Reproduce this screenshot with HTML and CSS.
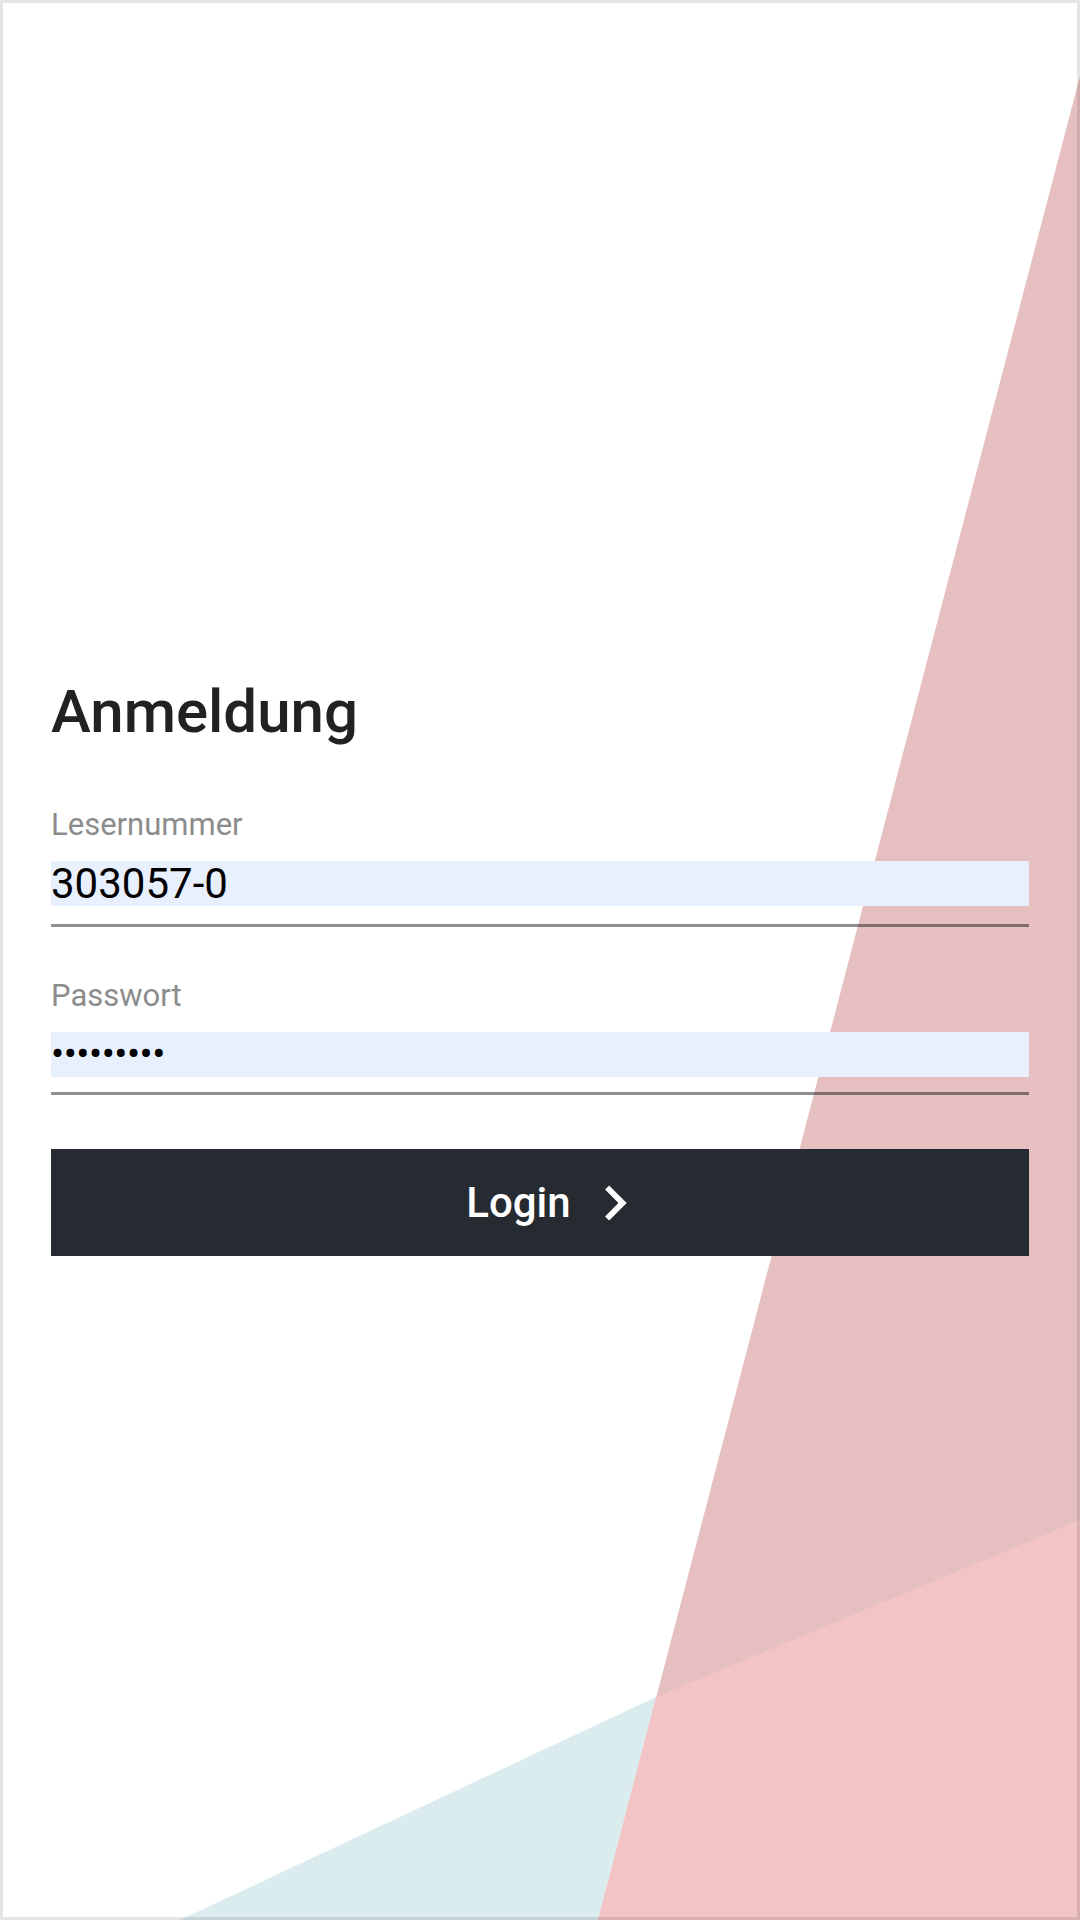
FILE: index.html
```html
<!DOCTYPE html>
<html lang="de">
<head>
<meta charset="utf-8">
<title>Anmeldung</title>
<link rel="stylesheet" href="styles.css">
</head>
<body>
<div class="screen">
  <svg class="backdrop" width="1080" height="1920" viewBox="0 0 1080 1920" aria-hidden="true">
    <polygon points="1080,76 598,1920 1080,1920" fill="#e6c0c1"/>
    <polygon points="180,1920 656,1697 598,1920" fill="#dbecef"/>
    <polygon points="656,1697 1080,1520 1080,1920 598,1920" fill="#f2c4c5"/>
  </svg>
  <form class="login">
    <h1 class="title">Anmeldung</h1>
    <label class="field">
      <span class="field-label">Lesernummer</span>
      <span class="field-box"><input class="field-input" type="text" value="303057-0"></span>
    </label>
    <label class="field field-second">
      <span class="field-label">Passwort</span>
      <span class="field-box field-box-tight"><input class="field-input field-password" type="password" value="123456789"></span>
    </label>
    <button class="submit" type="button">
      <span class="submit-text">Login</span>
      <svg class="submit-icon" width="70" height="70" viewBox="0 0 24 24" aria-hidden="true"><path d="M10 6L8.59 7.41 13.17 12l-4.58 4.59L10 18l6-6z" fill="#ffffff"/></svg>
    </button>
  </form>
</div>
</body>
</html>
```

FILE: styles.css
```css
html, body {
  margin: 0;
  padding: 0;
  background: #ffffff;
}

.screen {
  position: relative;
  width: 1080px;
  height: 1920px;
  box-sizing: border-box;
  padding: 676px 51px 0;
  overflow: hidden;
  background: #ffffff;
  font-family: Roboto, "Noto Sans", "Liberation Sans", sans-serif;
}

.screen::after {
  content: "";
  position: absolute;
  inset: 0;
  border: 3px solid rgba(0, 0, 0, 0.1);
  pointer-events: none;
  z-index: 3;
}

.backdrop {
  position: absolute;
  left: 0;
  top: 0;
  z-index: 0;
}

.login {
  position: relative;
  z-index: 1;
  display: flex;
  flex-direction: column;
  margin: 0;
}

.title {
  margin: 0;
  font-size: 60px;
  line-height: 72px;
  font-weight: 500;
  color: #222222;
}

.field {
  display: flex;
  flex-direction: column;
  margin-top: 59px;
}

.field-second {
  margin-top: 51px;
}

.field-label {
  font-size: 31px;
  line-height: 36px;
  color: #8c8c8c;
  margin-bottom: 18px;
}

.field-box {
  display: block;
  padding-bottom: 18px;
  border-bottom: 3px solid rgba(0, 0, 0, 0.44);
}

.field-box-tight {
  padding-bottom: 15px;
}

.field-input {
  display: block;
  box-sizing: border-box;
  width: 100%;
  height: 45px;
  margin: 0;
  padding: 0;
  border: none;
  outline: none;
  background: #e8f0fe;
  color: #000000;
  font-family: Roboto, "Noto Sans", "Liberation Sans", sans-serif;
  font-size: 42px;
  line-height: 45px;
}

.field-password {
  font-size: 39px;
  letter-spacing: -0.5px;
}

.submit {
  display: flex;
  align-items: center;
  justify-content: center;
  height: 107px;
  margin-top: 54px;
  padding: 0 0 0 36px;
  border: none;
  background: #262a31;
  color: #ffffff;
  font-family: Roboto, "Noto Sans", "Liberation Sans", sans-serif;
  font-size: 42px;
  font-weight: 500;
}

.submit-text {
  line-height: 48px;
}

.submit-icon {
  display: block;
  margin-left: 9px;
}
```
